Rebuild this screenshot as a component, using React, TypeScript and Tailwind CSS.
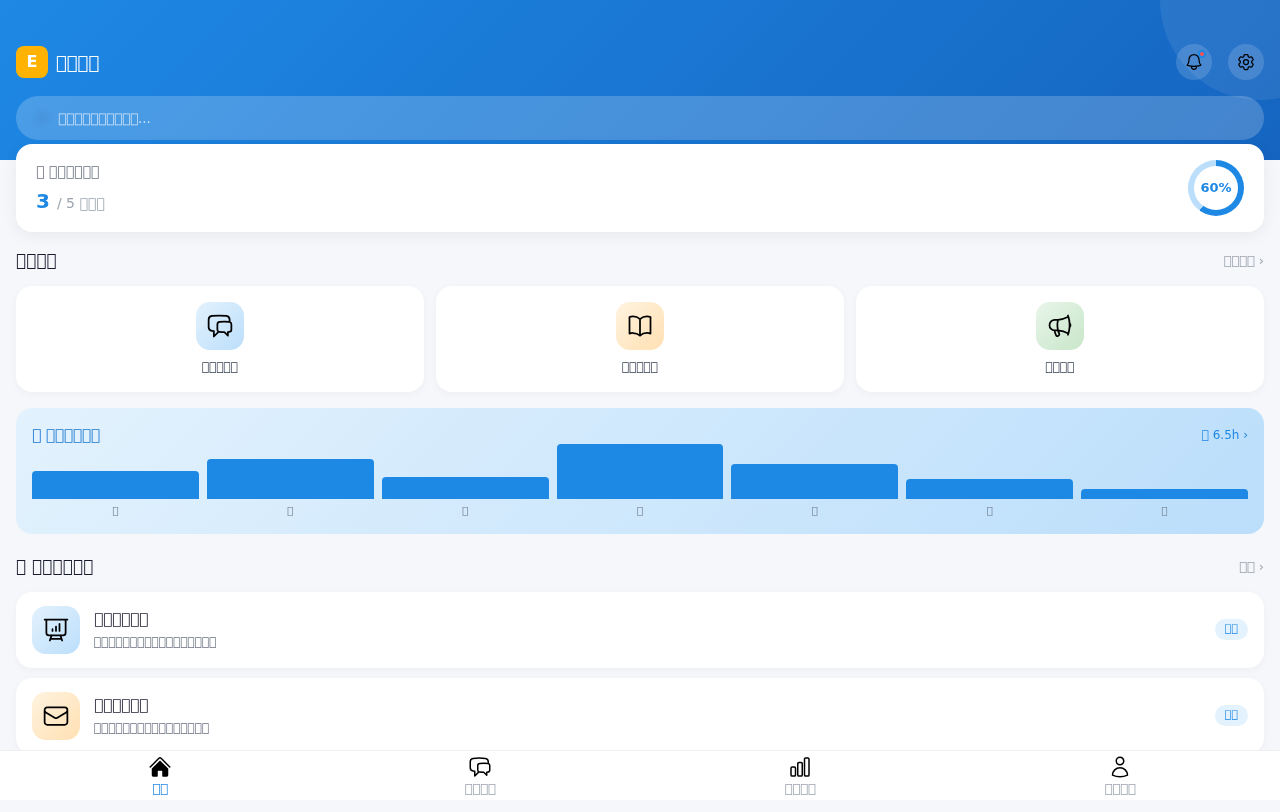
import { HiHome, HiOutlineBell, HiOutlineBookOpen, HiOutlineChartBar, HiOutlineChatBubbleLeftRight, HiOutlineCog6Tooth, HiOutlineEnvelope, HiOutlineMegaphone, HiOutlinePresentationChartBar, HiOutlineUser } from 'react-icons/hi2'

// the reference shows missing-glyph boxes instead of readable text
const box = (n: number) => '\uE000'.repeat(n)

const quickActions = [
  { label: box(5), Icon: HiOutlineChatBubbleLeftRight, bg: 'bg-[linear-gradient(135deg,#e3f2fd,#bbdefb)]' },
  { label: box(5), Icon: HiOutlineBookOpen, bg: 'bg-[linear-gradient(135deg,#fff3e0,#ffe0b2)]' },
  { label: box(4), Icon: HiOutlineMegaphone, bg: 'bg-[linear-gradient(135deg,#e8f5e9,#c8e6c9)]' },
]

const weekBars = [28, 40, 22, 55, 35, 20, 10]

const recommended = [
  { title: box(6), desc: box(17), Icon: HiOutlinePresentationChartBar, bg: 'bg-[linear-gradient(135deg,#e3f2fd,#bbdefb)]' },
  { title: box(6), desc: box(16), Icon: HiOutlineEnvelope, bg: 'bg-[linear-gradient(135deg,#fff3e0,#ffe0b2)]' },
]

const navItems = [
  { label: box(2), Icon: HiHome, active: true },
  { label: box(4), Icon: HiOutlineChatBubbleLeftRight, active: false },
  { label: box(4), Icon: HiOutlineChartBar, active: false },
  { label: box(4), Icon: HiOutlineUser, active: false },
]

function SectionHeader({ title, more }: { title: string; more: string }) {
  return (
    <div className="flex items-center justify-between h-[24px] mb-[14px]">
      <h2 className="text-[17px] font-semibold leading-[24px] text-[#1a1a2e]">{title}</h2>
      <span className="translate-y-px text-[13px] text-[#9ca3af]">{more} ›</span>
    </div>
  )
}

export default function App() {
  return (
    <div className="h-[812px] overflow-hidden bg-[#f5f7fa] text-black will-change-transform font-['DejaVu_Sans',sans-serif]">
      {/* Header */}
      <div className="relative h-[160px] overflow-hidden bg-[linear-gradient(135deg,#1e88e5,#1565c0)] px-4 pt-[44px]">
        <div className="absolute -top-[100px] -right-[80px] w-[200px] h-[200px] rounded-full bg-white/[0.08]" />
        <div className="relative flex items-center justify-between h-[36px]">
          <div className="flex items-center gap-2">
            <div className="w-8 h-8 rounded-lg bg-[#ffb300] text-white font-bold text-base flex items-center justify-center">E</div>
            <span className="text-[18px] font-medium text-white">{box(4)}</span>
          </div>
          <div className="flex gap-4">
            <button className="relative w-9 h-9 rounded-full bg-white/15 flex items-center justify-center">
              <HiOutlineBell className="w-5 h-5" />
              <span className="absolute top-[6px] right-[6px] w-[8px] h-[8px] rounded-full bg-[#ff5252] border-2 border-[#1e88e5]" />
            </button>
            <button className="w-9 h-9 rounded-full bg-white/15 flex items-center justify-center">
              <HiOutlineCog6Tooth className="w-5 h-5" />
            </button>
          </div>
        </div>
        <div className="relative mt-4 h-[44px] rounded-full bg-white/20 flex items-center pl-[14px] text-[13.33px] text-white/70">
          <span className="w-6 h-6 mr-1 rounded-full bg-[radial-gradient(circle,rgba(0,0,0,0.05),transparent_75%)]" />
          <span className="translate-y-px">{box(10)}...</span>
        </div>
      </div>

      <div className="px-4 -mt-4 relative">
        {/* Stats card */}
        <div className="h-[88px] bg-white rounded-2xl shadow-[0_4px_16px_rgba(0,0,0,0.06)] flex items-center justify-between px-5 mb-4">
          <div>
            <p className="text-[14px] text-[#6b7280] mb-[4px]">{box(1)} {box(6)}</p>
            <p className="text-[14px] text-[#9ca3af]">
              <span className="text-[20px] font-bold text-[#1e88e5] mr-[7px]">3</span>/ 5 {box(3)}
            </p>
          </div>
          <div className="w-14 h-14 rounded-full bg-[conic-gradient(#1e88e5_0_60%,#bbdefb_60%_100%)] flex items-center justify-center">
            <div className="w-11 h-11 rounded-full bg-white flex items-center justify-center text-[13px] font-bold text-[#1e88e5]">60%</div>
          </div>
        </div>

        {/* Quick actions */}
        <SectionHeader title={box(4)} more={box(4)} />
        <div className="grid grid-cols-3 gap-3 mb-4">
          {quickActions.map(({ label, Icon, bg }, i) => (
            <div key={i} className="h-[106px] bg-white rounded-2xl shadow-[0_2px_8px_rgba(0,0,0,0.04)] flex flex-col items-center pt-4">
              <div className={`w-12 h-12 rounded-[14px] ${bg} flex items-center justify-center`}>
                <Icon className="w-7 h-7" />
              </div>
              <span className="mt-2 text-[12px] font-medium text-[#374151]">{label}</span>
            </div>
          ))}
        </div>

        {/* Week chart */}
        <div className="h-[126px] rounded-2xl bg-[linear-gradient(135deg,#e3f2fd,#bbdefb)] px-4 pt-4 mb-5">
          <div className="flex items-center justify-between h-[21px]">
            <span className="translate-y-px text-[15px] font-medium text-[#1976d2]">{box(1)} {box(6)}</span>
            <span className="text-[12px] text-[#1e88e5]">{box(1)} 6.5h ›</span>
          </div>
          <div className="flex gap-2 -mt-px">
            {weekBars.map((h, i) => (
              <div key={i} className="flex-1 flex flex-col items-center">
                <div className="h-[55px] w-full flex items-end">
                  <div className="w-full bg-[#1e88e5] rounded-t-[4px]" style={{ height: h }} />
                </div>
                <span className="mt-1 text-[10px] text-[#6b7280]">{box(1)}</span>
              </div>
            ))}
          </div>
        </div>

        {/* Recommended */}
        <SectionHeader title={`${box(1)} ${box(6)}`} more={box(2)} />
        <div className="flex flex-col gap-[10px]">
          {recommended.map(({ title, desc, Icon, bg }, i) => (
            <div key={i} className="h-[76px] bg-white rounded-2xl shadow-[0_2px_8px_rgba(0,0,0,0.04)] flex items-center px-4">
              <div className={`w-12 h-12 rounded-[14px] ${bg} flex items-center justify-center`}>
                <Icon className="w-7 h-7" />
              </div>
              <div className="ml-[14px] flex-1">
                <p className="text-[15px] leading-[20px] font-medium text-[#1a1a2e]">{title}</p>
                <p className="mt-[4px] text-[12px] text-[#6b7280]">{desc}</p>
              </div>
              <span className="h-[21px] -mt-px px-[10px] flex items-center rounded-full bg-[#e3f2fd] text-[11px] text-[#1e88e5]">{box(2)}</span>
            </div>
          ))}
        </div>
      </div>

      {/* Bottom nav */}
      <nav className="fixed left-0 right-0 bottom-3 h-[50px] bg-white border-t border-[#f0f0f0] grid grid-cols-4">
        {navItems.map(({ label, Icon, active }, i) => (
          <div key={i} className="flex flex-col items-center pt-1">
            <Icon className="w-6 h-6" />
            <span className={`text-[13px] leading-[20px] ${active ? 'text-[#1e88e5]' : 'text-[#9ca3af]'}`}>{label}</span>
          </div>
        ))}
      </nav>
    </div>
  )
}
